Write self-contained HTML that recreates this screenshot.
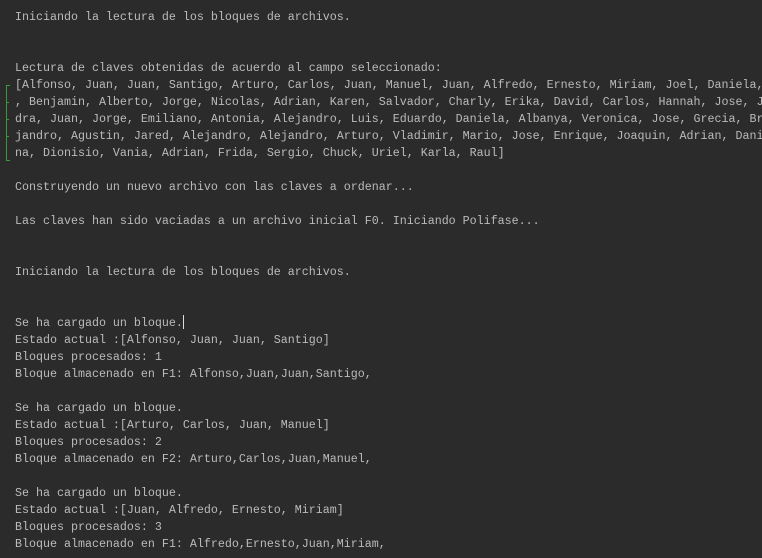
<!DOCTYPE html>
<html><head><style>
html,body{margin:0;padding:0;background:#2b2b2b;width:762px;height:558px;overflow:hidden}
pre{margin:0;position:absolute;left:15px;top:9px;font-family:"Liberation Mono",monospace;font-size:11.67px;line-height:17px;color:#bbbbbb;white-space:pre}
.br{position:absolute;left:6px;width:3px;border-left:1px solid #3c9a3c}
.cur{display:inline-block;width:1px;height:14px;background:#ddd;vertical-align:-3px}
</style></head><body>
<div class="br" style="top:85px;height:75px"></div>
<div style="position:absolute;left:6px;top:85px;width:4px;height:1px;background:#3c9a3c"></div>
<div style="position:absolute;left:6px;top:102px;width:3px;height:1px;background:#3c9a3c"></div>
<div style="position:absolute;left:6px;top:119px;width:3px;height:1px;background:#3c9a3c"></div>
<div style="position:absolute;left:6px;top:136px;width:3px;height:1px;background:#3c9a3c"></div>
<div style="position:absolute;left:6px;top:160px;width:4px;height:1px;background:#3c9a3c"></div>
<pre>Iniciando la lectura de los bloques de archivos.


Lectura de claves obtenidas de acuerdo al campo seleccionado:
[Alfonso, Juan, Juan, Santigo, Arturo, Carlos, Juan, Manuel, Juan, Alfredo, Ernesto, Miriam, Joel, Daniela, 
, Benjamin, Alberto, Jorge, Nicolas, Adrian, Karen, Salvador, Charly, Erika, David, Carlos, Hannah, Jose, J
dra, Juan, Jorge, Emiliano, Antonia, Alejandro, Luis, Eduardo, Daniela, Albanya, Veronica, Jose, Grecia, Br
jandro, Agustin, Jared, Alejandro, Alejandro, Arturo, Vladimir, Mario, Jose, Enrique, Joaquin, Adrian, Dani
na, Dionisio, Vania, Adrian, Frida, Sergio, Chuck, Uriel, Karla, Raul]

Construyendo un nuevo archivo con las claves a ordenar...

Las claves han sido vaciadas a un archivo inicial F0. Iniciando Polifase...


Iniciando la lectura de los bloques de archivos.


Se ha cargado un bloque.<span class="cur"></span>
Estado actual :[Alfonso, Juan, Juan, Santigo]
Bloques procesados: 1
Bloque almacenado en F1: Alfonso,Juan,Juan,Santigo,

Se ha cargado un bloque.
Estado actual :[Arturo, Carlos, Juan, Manuel]
Bloques procesados: 2
Bloque almacenado en F2: Arturo,Carlos,Juan,Manuel,

Se ha cargado un bloque.
Estado actual :[Juan, Alfredo, Ernesto, Miriam]
Bloques procesados: 3
Bloque almacenado en F1: Alfredo,Ernesto,Juan,Miriam,</pre>
</body></html>
